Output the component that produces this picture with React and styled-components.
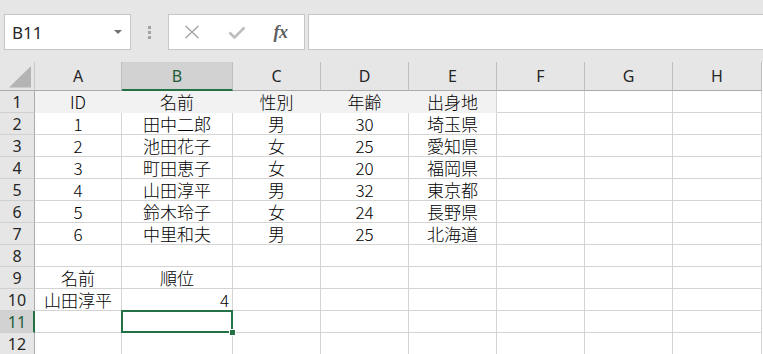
import React, { Fragment } from "react";
import styled, { createGlobalStyle } from "styled-components";

const GREEN = "#217346";
const GRID = "#d4d4d4";

const GlobalStyle = createGlobalStyle`
  html, body {
    margin: 0;
    padding: 0;
    background: #ffffff;
    overflow: hidden;
  }
`;

const columns = ["A", "B", "C", "D", "E", "F", "G", "H"];
const widths = [35, 87, 111, 88, 88, 88, 88, 88, 89];

const rows = [
  ["ID", "名前", "性別", "年齢", "出身地"],
  ["1", "田中二郎", "男", "30", "埼玉県"],
  ["2", "池田花子", "女", "25", "愛知県"],
  ["3", "町田恵子", "女", "20", "福岡県"],
  ["4", "山田淳平", "男", "32", "東京都"],
  ["5", "鈴木玲子", "女", "24", "長野県"],
  ["6", "中里和夫", "男", "25", "北海道"],
  [],
  ["名前", "順位"],
  ["山田淳平", { v: "4", align: "right" }],
  [],
  [],
];

const SELECTED_COL = 1;
const SELECTED_ROW = 10;

const App = () => {
  return (
    <Fragment>
      <GlobalStyle />
      <Page>
        <FormulaBar>
          <NameBox>
            <NameText>B11</NameText>
            <Caret />
          </NameBox>
          <Grip>
            <Dot />
            <Dot />
            <Dot />
          </Grip>
          <FxButtons>
            <FxButton>
              <svg width="16" height="14" viewBox="0 0 16 14">
                <path d="M1.5 1 L14.5 13 M14.5 1 L1.5 13" stroke="#a6a6a6" strokeWidth="1.5" fill="none" />
              </svg>
            </FxButton>
            <FxButton>
              <svg width="18" height="13" viewBox="0 0 18 13">
                <path d="M1.5 6.5 L6.5 11.5 L16.5 1.5" stroke="#bdbdbd" strokeWidth="2.6" fill="none" />
              </svg>
            </FxButton>
            <FxButton>
              <FxLabel>fx</FxLabel>
            </FxButton>
          </FxButtons>
          <FormulaInput />
        </FormulaBar>

        <Sheet $widths={widths}>
          <Corner>
            <svg width="35" height="29" viewBox="0 0 35 29">
              <polygon points="9,25.5 31,25.5 31,4" fill="#b4b4b4" />
            </svg>
          </Corner>
          {columns.map((c, i) => (
            <ColHeader key={c} $selected={i === SELECTED_COL}>
              {c}
            </ColHeader>
          ))}
          {rows.map((row, r) => (
            <Fragment key={r}>
              <RowHeader $selected={r === SELECTED_ROW}>{r + 1}</RowHeader>
              {columns.map((c, i) => {
                const raw = row[i];
                const value = raw && typeof raw === "object" ? raw.v : raw;
                const align = raw && typeof raw === "object" ? raw.align : "center";
                const fill = r === 0 && i < 5;
                return (
                  <Cell
                    key={c}
                    $align={align}
                    $fill={fill}
                    $edge={r === 0 && i === 4}
                    $selected={r === SELECTED_ROW && i === SELECTED_COL}
                  >
                    {value}
                  </Cell>
                );
              })}
            </Fragment>
          ))}
        </Sheet>
      </Page>
    </Fragment>
  );
};

const Page = styled.div`
  width: 763px;
  height: 354px;
  overflow: hidden;
  background: #ffffff;
`;

const FormulaBar = styled.div`
  display: flex;
  align-items: flex-start;
  height: 62px;
  box-sizing: border-box;
  padding: 14px 0 0 4px;
  background: #e6e6e6;
  margin-right: -3px;
`;

const boxBase = `
  box-sizing: border-box;
  height: 36px;
  background: #ffffff;
  border: 1px solid #c6c6c6;
`;

const NameBox = styled.div`
  ${boxBase}
  width: 127px;
  display: flex;
  align-items: center;
  justify-content: space-between;
  padding: 0 8px 0 7px;
`;

const NameText = styled.span`
  font-family: "Noto Sans", "Open Sans", sans-serif;
  font-size: 17px;
  color: #262626;
  padding-top: 1px;
`;

const Caret = styled.span`
  width: 0;
  height: 0;
  border-left: 4px solid transparent;
  border-right: 4px solid transparent;
  border-top: 4px solid #707070;
`;

const Grip = styled.div`
  width: 37px;
  height: 36px;
  display: flex;
  flex-direction: column;
  align-items: center;
  justify-content: center;
  gap: 2px;
`;

const Dot = styled.span`
  width: 3px;
  height: 3px;
  background: #a3a3a3;
`;

const FxButtons = styled.div`
  ${boxBase}
  width: 137px;
  display: flex;
  align-items: center;
`;

const FxButton = styled.div`
  width: 45px;
  height: 100%;
  display: flex;
  align-items: center;
  justify-content: center;
`;

const FxLabel = styled.span`
  font-family: "Liberation Serif", "DejaVu Serif", serif;
  font-style: italic;
  font-weight: 700;
  font-size: 18px;
  color: #5f5f5f;
  letter-spacing: -0.5px;
  margin-left: -2px;
`;

const FormulaInput = styled.div`
  ${boxBase}
  flex: 1;
  margin-left: 3px;
`;

const Sheet = styled.div`
  display: grid;
  grid-template-columns: ${(p) => p.$widths.map((w) => `${w}px`).join(" ")};
  grid-template-rows: 29px;
  grid-auto-rows: 22px;
`;

const headerFont = `
  font-family: "Noto Sans", "Open Sans", sans-serif;
  font-size: 16px;
`;

const Corner = styled.div`
  box-sizing: border-box;
  background: #e6e6e6;
  border-right: 1px solid #c8c8c8;
  border-bottom: 1px solid #ababab;
  svg {
    display: block;
  }
`;

const ColHeader = styled.div`
  ${headerFont}
  box-sizing: border-box;
  display: flex;
  align-items: center;
  justify-content: center;
  background: ${(p) => (p.$selected ? "#d2d2d2" : "#e6e6e6")};
  color: ${(p) => (p.$selected ? "#1d5c3a" : "#262626")};
  border-right: 1px solid #bdbdbd;
  border-bottom: ${(p) => (p.$selected ? `2px solid ${GREEN}` : "1px solid #ababab")};
  padding-top: ${(p) => (p.$selected ? "1px" : "0")};
`;

const RowHeader = styled.div`
  ${headerFont}
  box-sizing: border-box;
  display: flex;
  align-items: flex-end;
  justify-content: center;
  line-height: 18px;
  padding-bottom: 1px;
  background: ${(p) => (p.$selected ? "#d2d2d2" : "#e6e6e6")};
  color: ${(p) => (p.$selected ? "#1d5c3a" : "#262626")};
  border-right: ${(p) => (p.$selected ? `2px solid ${GREEN}` : "1px solid #ababab")};
  border-bottom: 1px solid #d0d0d0;
  padding-left: ${(p) => (p.$selected ? "1px" : "0")};
`;

const Cell = styled.div`
  position: relative;
  box-sizing: border-box;
  display: flex;
  align-items: flex-end;
  justify-content: ${(p) => (p.$align === "right" ? "flex-end" : "center")};
  padding: 0 3px 1px 3px;
  font-family: "Noto Sans CJK JP", "Noto Sans CJK SC", sans-serif;
  font-weight: 300;
  font-size: 17px;
  line-height: 18px;
  color: #000000;
  white-space: nowrap;
  background: ${(p) => (p.$fill ? "#f2f2f2" : "#ffffff")};
  border-right: 1px solid ${(p) => (p.$fill && !p.$edge ? "#f2f2f2" : GRID)};
  border-bottom: 1px solid ${(p) => (p.$fill ? "#f2f2f2" : GRID)};

  ${(p) =>
    p.$selected &&
    `
    &::after {
      content: "";
      position: absolute;
      top: -1px;
      left: -1px;
      right: -1px;
      bottom: -1px;
      border: 2px solid ${GREEN};
      z-index: 2;
    }
    &::before {
      content: "";
      position: absolute;
      right: -4px;
      bottom: -4px;
      width: 5px;
      height: 5px;
      background: ${GREEN};
      border: 1px solid #ffffff;
      z-index: 3;
    }
  `}
`;

export default App;
